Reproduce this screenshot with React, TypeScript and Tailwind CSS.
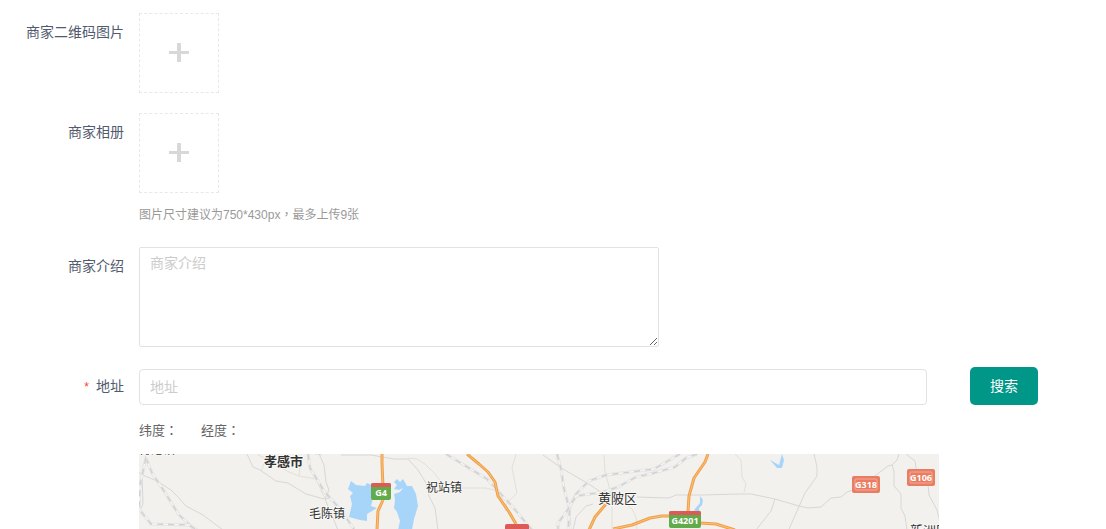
import type { ReactNode } from "react";

const roads = [
  "M7 0 L3 20 L4 50 L1 56",
  "M-1 18 L6 22 L18 27 L32 36 L39 43 L47 52 L64 61 L84 76",
  "M108 0 L114 13 L121 16 L137 27 L149 29 L167 40 L185 45",
  "M180 0 L185 11 L187 28 L190 36 L186 45 L199 76",
  "M186 45 L191 44",
  "M202 1 L232 1 L255 5 L269 5 L279 16 L287 29 L290 42 L296 54 L299 76",
  "M404 1 L424 15 L448 29 L462 38",
  "M454 50 L447 52 L437 63 L434 76",
  "M498 43 L530 44 L537 41 L563 41 L600 40 L612 40 L636 45 L660 52 L669 54 L682 53 L692 44 L702 43 L708 38 L717 35 L737 21 L749 12 L753 11 L758 6 L760 0",
  "M675 0 L678 13 L678 22 L666 39 L650 75",
  "M636 45 L632 57 L617 76",
  "M753 11 L755 17 L755 32 L762 40 L762 54 L766 62 L768 76",
  "M767 0 L776 7 L778 20 M789 30 L790 41 L798 56 L801 68",
];

const lanes = [
  "M118 0 L127 5 L122 17 M127 5 L150 18 L160 22 L177 25 M160 21 L161 13 M177 25 L186 45 M176 0 L183 1",
  "M269 4 L278 5 L286 10 L296 20 L303 29 M323 34 L347 34 L355 36 L370 50",
  "M377 0 L373 14 L378 39 L368 49 L366 57",
  "M465 1 L466 18 L472 39 M487 50 L493 55 L497 63 L498 76 M473 53 L473 76",
  "M596 0 L602 6 L603 23 L607 30 L605 38",
];

const railways = [
  "M7 4 L13 19 L25 37 L40 61 L54 74 L58 76",
  "M7 4 L1 31 L0 55 L12 70 L50 71 L58 76",
  "M169 0 L171 14 L185 37 L193 46 L202 56 L215 75",
  "M307 0 L325 11 L348 25 L361 39 L372 51 L393 76",
  "M418 0 L422 15 L425 35 L430 53 L431 76",
  "M541 0 L515 15 L467 21 L450 27 L437 40 L431 52 L429 76",
  "M558 0 L547 4 L536 13 L511 20 L497 23 L479 33 L464 38 L437 42 L428 57 L419 69 L419 76",
];

const highways = [
  "M243 0 L243 9 L244 33 M244 46 L239 57 L238 76",
  "M328 0 L340 10 L349 18 L356 28 L359 42 L370 58 L377 70",
  "M569 0 L566 8 L555 24 L550 42 L549 58",
  "M467 50 L456 63 L450 76",
  "M474 75 L493 71 L511 64 L523 62 L531 62 M561 69 L577 70 L596 76",
];

const lakes = [
  "M212 27 L217 31 L226 32 L228 29 L235 32 L240 45 L234 44 L232 52 L238 54 L233 57 L228 60 L228 67 L221 66 L210 63 L213 50 L211 42 L214 39 L209 35 Z",
  "M255 28 L258 25 L261 28 L264 25 L268 32 L273 32 L277 40 L279 52 L275 65 L273 76 L259 76 L261 67 L258 58 L255 54 L256 46 L255 40 L261 38 L264 34 L260 36 L255 35 L258 31 Z",
  "M561 42 L564 46 L563 51 L560 54 L561 61 L556 64 L558 58 L555 56 L561 49 Z",
  "M643 0 L645 6 L643 14 L638 14 L631 6 L640 11 Z",
];

function FormItem({ label, htmlFor, required, children }: {
  label: string;
  htmlFor: string;
  required?: boolean;
  children: ReactNode;
}) {
  return (
    <div className="flex items-start">
      <label
        htmlFor={htmlFor}
        className="w-[139px] shrink-0 pr-[15px] text-right text-sm leading-[38px] text-[#515a6e]"
      >
        {required && <span className="mr-[7px] text-xs text-[#ff3b30]">*</span>}
        {label}
      </label>
      <div className="min-w-0 flex-1">{children}</div>
    </div>
  );
}

function UploadButton({ id }: { id: string }) {
  return (
    <button
      id={id}
      type="button"
      className="flex size-20 cursor-pointer items-center justify-center border border-dashed border-[#e8e8e8]"
    >
      <svg width="20" height="20" viewBox="0 0 20 20" fill="#d8d8d8" aria-hidden="true">
        <path d="M8 0h4v8h8v3h-8v8H8v-8H0V8h8z" />
      </svg>
    </button>
  );
}

// full-width punctuation centred in its cell
function Punct({ children }: { children: ReactNode }) {
  return <span className="font-['Noto_Sans_CJK_TC',sans-serif] leading-none">{children}</span>;
}

function MapView() {
  return (
    <div className="h-[75px] max-w-[800px] overflow-hidden bg-[#f2f1ee]">
      <svg width="800" height="76" viewBox="0 0 800 76" fill="none" strokeLinejoin="round">
        {lakes.map((d) => <path key={d} d={d} fill="#a7d5fa" />)}
        {lanes.map((d) => <path key={d} d={d} stroke="#e2e1d3" />)}
        {roads.map((d) => <path key={d} d={d} stroke="#d8d7d6" />)}
        {railways.map((d) => (
          <g key={d}>
            <path d={d} stroke="#e2e2e2" strokeWidth="3" />
            <path d={d} stroke="#f5f5f3" strokeWidth="1.4" />
            <path d={d} stroke="#d0d0d3" strokeWidth="1.4" strokeDasharray="6 5" />
          </g>
        ))}
        {highways.map((d) => (
          <g key={d}>
            <path d={d} stroke="#efa049" strokeWidth="3" />
            <path d={d} stroke="#fbc078" strokeWidth="1" />
          </g>
        ))}

        <rect x="232" y="29" width="20" height="17" rx="2" fill="#62ab4b" />
        <path d="M232 33v-2q0-2 2-2h16q2 0 2 2v2z" fill="#dc5b56" />
        <rect x="530" y="57" width="32" height="17" rx="2" fill="#62ab4b" />
        <path d="M530 61v-2q0-2 2-2h28q2 0 2 2v2z" fill="#dc5b56" />
        <path d="M366 76v-4q0-2 2-2h20q2 0 2 2v4z" fill="#dc5b56" />
        <rect x="713" y="22" width="28" height="17" rx="2" fill="#e97c61" />
        <rect x="716" y="25" width="22" height="11" rx="1" stroke="#f3ac9b" />
        <rect x="768" y="15" width="28" height="17" rx="2" fill="#e97c61" />
        <rect x="771" y="18" width="22" height="11" rx="1" stroke="#f3ac9b" />

        <g className="font-['Open_Sans',sans-serif] text-[9px] font-bold" fill="#fff" textAnchor="middle">
          <text x="242" y="42">G4</text>
          <text x="546" y="70">G4201</text>
          <text x="727" y="34">G318</text>
          <text x="782" y="27">G106</text>
        </g>

        <g className="text-[13px]" fill="#333" stroke="#f8f8f6" strokeWidth="2" paintOrder="stroke">
          <text x="125" y="12" className="font-bold">孝感市</text>
          <text x="459" y="49">黄陂区</text>
          <text x="771" y="81">新洲区</text>
        </g>
        <g className="text-xs" fill="#333" stroke="#f8f8f6" strokeWidth="2" paintOrder="stroke">
          <text x="0" y="0">肖港镇</text>
          <text x="170" y="64">毛陈镇</text>
          <text x="287" y="38">祝站镇</text>
        </g>
      </svg>
    </div>
  );
}

export default function App() {
  return (
    <form
      className="flex flex-col bg-white pt-[13px] font-['Liberation_Sans','Noto_Sans_CJK_SC',sans-serif] text-[#666]"
      onSubmit={(e) => e.preventDefault()}
    >
      <div className="flex flex-col gap-5">
        <FormItem label="商家二维码图片" htmlFor="qrcode">
          <UploadButton id="qrcode" />
        </FormItem>

        <FormItem label="商家相册" htmlFor="album">
          <UploadButton id="album" />
          <p className="mt-3 mb-0.5 text-xs leading-5 text-[#999]">
            图片尺寸建议为750*430px<Punct>，</Punct>最多上传9张
          </p>
        </FormItem>

        <FormItem label="商家介绍" htmlFor="intro">
          <textarea
            id="intro"
            placeholder="商家介绍"
            className="block h-[100px] w-full max-w-[520px] rounded-xs border border-[#e2e2e2] px-2.5 py-[5px] text-sm leading-5 outline-none placeholder:text-[#ccc]"
          />
        </FormItem>

        <FormItem label="地址" htmlFor="address" required>
          <div className="flex items-end pr-[68px]">
            <input
              id="address"
              type="text"
              placeholder="地址"
              className="h-9 min-w-0 flex-1 rounded-sm border border-[#e2e2e2] px-2.5 text-sm outline-none placeholder:text-[#ccc]"
            />
            <button type="submit" className="ml-[43px] h-[38px] w-[68px] shrink-0 cursor-pointer rounded-[5px] bg-[#009688] text-sm text-white">
              搜索
            </button>
          </div>
        </FormItem>
      </div>

      <div className="pl-[139px]">
        <div className="mt-4 mb-[13px] flex gap-[23px] text-[13px] leading-5">
          <span>纬度<Punct>：</Punct></span>
          <span>经度<Punct>：</Punct></span>
        </div>
        <MapView />
      </div>
    </form>
  );
}
